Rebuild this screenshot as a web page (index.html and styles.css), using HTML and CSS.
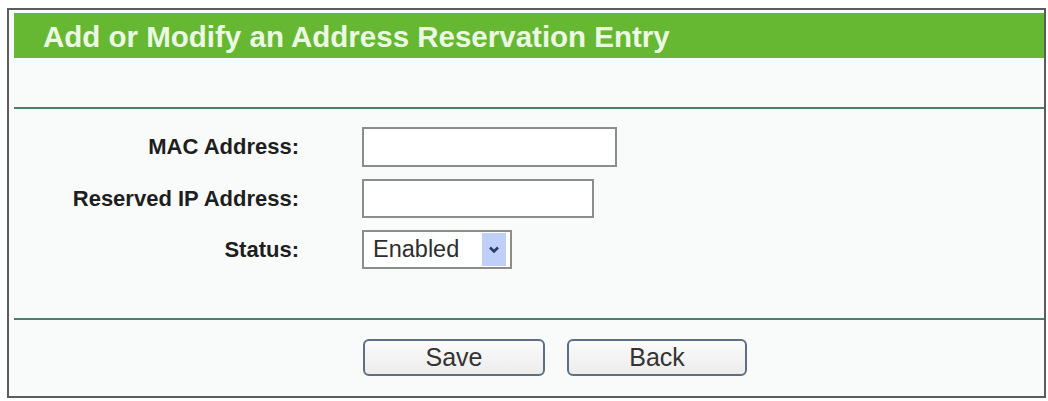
FILE: index.html
```html
<!DOCTYPE html>
<html>
<head>
  <link rel="stylesheet" href="styles.css">
</head>
<body>
  <div class="box">
    <div class="title">Add or Modify an Address Reservation Entry</div>
    <div class="spacer"></div>

    <div class="form">
      <label class="lbl">MAC Address:</label>
      <div class="field"><input type="text" class="txt mac"></div>

      <label class="lbl">Reserved IP Address:</label>
      <div class="field"><input type="text" class="txt ip"></div>

      <label class="lbl">Status:</label>
      <div class="field">
        <div class="sel">
          <span class="sel-text">Enabled</span>
          <span class="sel-btn">
            <svg width="12" height="10" viewBox="0 0 12 10">
              <path d="M2 2.5 L6 6.5 L10 2.5" fill="none" stroke="#2c3a66" stroke-width="2.6"/>
            </svg>
          </span>
        </div>
      </div>
    </div>

    <div class="buttons">
      <button class="btn save">Save</button>
      <button class="btn back">Back</button>
    </div>
  </div>
</body>
</html>
```

FILE: styles.css
```css
body {
  margin: 0;
  background: #ffffff;
  font-family: "Liberation Sans", Arial, sans-serif;
}

/* outer frame */
.box {
  margin: 8px 0 0 7px;
  width: 1039px;
  height: 390px;
  box-sizing: border-box;
  border: 2px solid #5c5c5c;
  padding: 3px 0 0 5px;
  background: #f9fafa;
}

/* green header bar */
.title {
  height: 45px;
  line-height: 47px;
  padding-left: 29px;
  background: #66b832;
  color: #ecf9e2;
  font-size: 29.5px;
  font-weight: bold;
  white-space: nowrap;
}

.spacer {
  height: 49px;
  border-bottom: 2px solid #4a7f6a;
}

/* form rows */
.form {
  display: grid;
  grid-template-columns: 285px auto;
  column-gap: 63px;
  row-gap: 12px;
  align-items: center;
  padding: 18px 0 49px 0;
  border-bottom: 2px solid #4a7f6a;
}

.lbl {
  text-align: right;
  font-size: 22px;
  font-weight: bold;
  color: #1e1e1e;
}

.txt {
  display: block;
  box-sizing: border-box;
  height: 40px;
  border: 2px solid #8c8c8c;
  background: #ffffff;
  margin: 0;
  padding: 0;
}

.mac {
  width: 255px;
}

.ip {
  width: 232px;
  height: 39px;
}

.sel {
  display: flex;
  align-items: center;
  justify-content: space-between;
  box-sizing: border-box;
  width: 150px;
  height: 39px;
  border: 2px solid #8c8c8c;
  background: #ffffff;
  padding: 0 4px 0 9px;
}

.sel-text {
  font-size: 23.5px;
  color: #2e2e2e;
}

.sel-btn {
  display: flex;
  align-items: center;
  justify-content: center;
  width: 24px;
  height: 33px;
  background: #c0cff7;
}

/* bottom buttons */
.buttons {
  display: flex;
  gap: 22px;
  padding: 19px 0 0 349px;
}

.btn {
  height: 37px;
  border: 2px solid #5f6e80;
  border-radius: 6px;
  background: linear-gradient(#fbfbfb, #ececec);
  font-family: "Liberation Sans", Arial, sans-serif;
  font-size: 25px;
  color: #333333;
  padding: 0;
}

.save {
  width: 182px;
}

.back {
  width: 180px;
}
```
